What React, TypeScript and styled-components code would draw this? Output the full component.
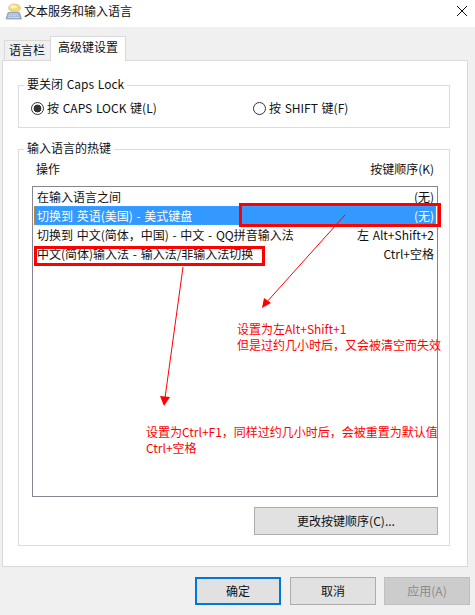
import styled, { createGlobalStyle } from "styled-components";

const GlobalStyle = createGlobalStyle`
  html, body {
    margin: 0;
    padding: 0;
    background: #fff;
  }
  * {
    box-sizing: border-box;
  }
`;

const rows = [
  { name: "在输入语言之间", keys: "(无)" },
  { name: "切换到 英语(美国) - 美式键盘", keys: "(无)", selected: true },
  { name: "切换到 中文(简体\uFF0C中国) - 中文 - QQ拼音输入法", keys: "左 Alt+Shift+2" },
  { name: "中文(简体)输入法 - 输入法/非输入法切换", keys: "Ctrl+空格" },
];

const KeyboardIcon = () => (
  <svg width="17" height="17" viewBox="0 0 17 17">
    <ellipse cx="9.5" cy="5" rx="6" ry="4" fill="#f3d878" stroke="#d8b860" strokeWidth="0.6" />
    <ellipse cx="8.5" cy="3.8" rx="3.5" ry="1.7" fill="#fcf2c4" />
    <path d="M3 9.5h11.5l2 6.5H1z" fill="#9db4d0" stroke="#6f8cb0" strokeWidth="0.6" />
    <path d="M4 11h9.5M3.4 12.8h10.7M2.8 14.5h11.8" stroke="#e4ecf5" strokeWidth="0.9" strokeDasharray="1.4 0.7" />
  </svg>
);

const CloseIcon = () => (
  <svg width="10" height="10" viewBox="0 0 10 10">
    <path d="M0 0L10 10M10 0L0 10" stroke="#111" strokeWidth="1" fill="none" />
  </svg>
);

const App = () => {
  return (
    <Window>
      <GlobalStyle />
      <TitleBar>
        <TitleGroup>
          <KeyboardIcon />
          文本服务和输入语言
        </TitleGroup>
        <CloseIcon />
      </TitleBar>

      <Body>
        <TabBar>
          <Tab>语言栏</Tab>
          <Tab $active>高级键设置</Tab>
        </TabBar>

        <Panel>
          <CapsGroup>
            <Legend>要关闭 Caps Lock</Legend>
            <RadioRow>
              <RadioLabel>
                <Radio $checked />按 CAPS LOCK 键(L)
              </RadioLabel>
              <RadioLabel>
                <Radio />按 SHIFT 键(F)
              </RadioLabel>
            </RadioRow>
          </CapsGroup>

          <HotkeyGroup>
            <Legend>输入语言的热键</Legend>
            <ListHeader>
              <span>操作</span>
              <span>按键顺序(K)</span>
            </ListHeader>
            <List>
              {rows.map((row) => (
                <Row key={row.name} $selected={row.selected}>
                  <span>{row.name}</span>
                  <span>{row.keys}</span>
                </Row>
              ))}
            </List>
            <ChangeRow>
              <ChangeButton>更改按键顺序(C)...</ChangeButton>
            </ChangeRow>
          </HotkeyGroup>
        </Panel>

        <Footer>
          <DialogButton $primary>确定</DialogButton>
          <DialogButton>取消</DialogButton>
          <DialogButton $disabled>应用(A)</DialogButton>
        </Footer>
      </Body>

      {/* red markup drawn over the dialog */}
      <Markup width="475" height="615" viewBox="0 0 475 615">
        <MarkBox x="240.5" y="204.5" width="199" height="21" />
        <MarkBox x="35.5" y="247.5" width="228" height="17" />
        <MarkLine x1="345" y1="215" x2="265" y2="304" />
        <MarkLine x1="183" y1="267" x2="165" y2="398" />
        <polygon points="262,308 264,298 271,303" fill="#f00" />
        <polygon points="164,406 160,396 170,397" fill="#f00" />
      </Markup>
      <Note $left={237} $top={321}>
        设置为左Alt+Shift+1
        <br />
        但是过约几小时后&#xFF0C;又会被清空而失效
      </Note>
      <Note $left={146} $top={424}>
        设置为Ctrl+F1&#xFF0C;同样过约几小时后&#xFF0C;会被重置为默认值
        <br />
        Ctrl+空格
      </Note>
    </Window>
  );
};
export default App;

const Window = styled.div`
  position: relative;
  width: 475px;
  height: 615px;
  display: flex;
  flex-direction: column;
  overflow: hidden;
  background-color: #fff;
  color: #111;
  font-family: "Noto Sans CJK SC", "Noto Sans", sans-serif;
  font-size: 12px;
  line-height: 16px;
  word-spacing: 1px;
`;

const TitleBar = styled.div`
  height: 27px;
  flex: none;
  display: flex;
  align-items: center;
  justify-content: space-between;
  padding: 0 8px 5px 5px;
`;

const TitleGroup = styled.div`
  display: flex;
  align-items: center;
  gap: 2px;
`;

const Body = styled.div`
  flex: 1;
  display: flex;
  flex-direction: column;
  background-color: #f0f0f0;
  padding: 9px 5px 10px 2px;
`;

const TabBar = styled.div`
  height: 25px;
  margin-bottom: -1px;
  padding-left: 2px;
  display: flex;
  align-items: flex-end;
  position: relative;
  z-index: 1;
`;

const Tab = styled.div<{ $active?: boolean }>`
  height: ${({ $active }) => ($active ? "25px" : "21px")};
  padding: ${({ $active }) => ($active ? "2px 7px 0" : "1px 5px 0 4px")};
  border: 1px solid #d9d9d9;
  border-bottom: ${({ $active }) => ($active ? "none" : "1px solid #d9d9d9")};
  border-right: ${({ $active }) => ($active ? "1px solid #d9d9d9" : "none")};
  background-color: ${({ $active }) => ($active ? "#fff" : "#f0f0f0")};
`;

const Panel = styled.div`
  width: 466px;
  height: 507px;
  flex: none;
  padding: 16px 17px 0 15px;
  background-color: #fff;
  border: 1px solid #d9d9d9;
  display: flex;
  flex-direction: column;
  gap: 13px;
`;

const Group = styled.fieldset`
  margin: 0;
  padding: 0 13px;
  min-width: 0;
  border: 1px solid #dcdcdc;
`;

const CapsGroup = styled(Group)`
  height: 51px;
  flex: none;
`;

const HotkeyGroup = styled(Group)`
  height: 405px;
  flex: none;
  display: flex;
  flex-direction: column;
`;

const Legend = styled.legend`
  padding: 0 3px 2px;
  margin-left: -8px;
  line-height: 14px;
`;

const RadioRow = styled.div`
  display: flex;
  padding-top: 7px;
  margin-left: -1px;
`;

const RadioLabel = styled.label`
  width: 222px;
  flex: none;
  display: flex;
  align-items: center;
  gap: 3px;
`;

const Radio = styled.span<{ $checked?: boolean }>`
  width: 13px;
  height: 13px;
  flex: none;
  border-radius: 50%;
  border: 1px solid #333;
  background: ${({ $checked }) =>
    $checked ? "radial-gradient(circle, #333 0 3.6px, #fff 4.2px)" : "#fff"};
`;

const ListHeader = styled.div`
  display: flex;
  justify-content: space-between;
  padding: 4px 2px 0 4px;
  margin-bottom: 9px;
`;

const List = styled.div`
  height: 311px;
  flex: none;
  padding: 0 1px;
  border: 1px solid #828790;
  margin-right: -2px;
`;

const Row = styled.div<{ $selected?: boolean }>`
  height: 19px;
  display: flex;
  align-items: center;
  justify-content: space-between;
  padding: 1px 2px 0 3px;
  color: ${({ $selected }) => ($selected ? "#fff" : "#111")};
  background-color: ${({ $selected }) => ($selected ? "#3399ff" : "transparent")};
  outline: ${({ $selected }) => ($selected ? "1px dotted #c58a4a" : "none")};
  outline-offset: -1px;
`;

const ChangeRow = styled.div`
  display: flex;
  justify-content: flex-end;
  margin-top: 10px;
  margin-right: -2px;
`;

const ChangeButton = styled.div`
  width: 184px;
  height: 28px;
  display: flex;
  align-items: center;
  justify-content: center;
  background-color: #e1e1e1;
  border: 1px solid #adadad;
`;

const Footer = styled.div`
  display: flex;
  justify-content: flex-end;
  gap: 8px;
  margin-top: 10px;
`;

const DialogButton = styled.div<{ $primary?: boolean; $disabled?: boolean }>`
  width: 86px;
  height: 28px;
  margin-right: ${({ $primary }) => ($primary ? "1px" : "0")};
  display: flex;
  align-items: center;
  justify-content: center;
  color: ${({ $disabled }) => ($disabled ? "#8a8a8a" : "#111")};
  background-color: ${({ $disabled }) => ($disabled ? "#cccccc" : "#e1e1e1")};
  border: ${({ $primary, $disabled }) =>
    $primary ? "2px solid #0078d7" : $disabled ? "1px solid #bfbfbf" : "1px solid #adadad"};
`;

const Markup = styled.svg`
  position: absolute;
  left: 0;
  top: 0;
  z-index: 2;
  pointer-events: none;
`;

const MarkBox = styled.rect`
  fill: none;
  stroke: #f00;
  stroke-width: 3px;
`;

const MarkLine = styled.line`
  stroke: #f00;
  stroke-width: 1px;
`;

const Note = styled.div<{ $left: number; $top: number }>`
  position: absolute;
  left: ${({ $left }) => $left}px;
  top: ${({ $top }) => $top}px;
  z-index: 3;
  color: #f00;
  line-height: 16px;
  word-spacing: 0;
  white-space: nowrap;
`;
